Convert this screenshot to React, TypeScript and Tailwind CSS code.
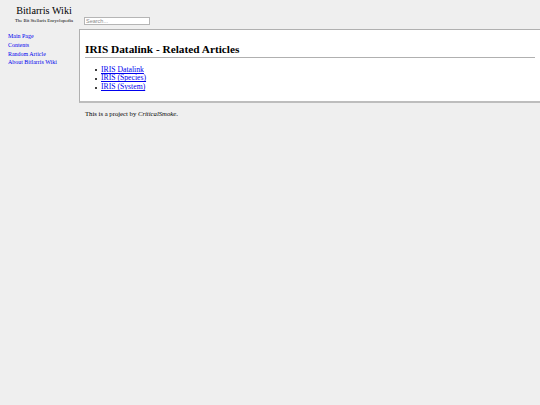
export default function App() {
  const sideLinks = ['Main Page', 'Contents', 'Random Article', 'About Bitlarris Wiki'];
  const articles = ['IRIS Datalink', 'IRIS (Species)', 'IRIS (System)'];

  return (
    <div className="min-h-screen bg-[#efefef] text-black" style={{ fontFamily: '"Liberation Serif", "Times New Roman", serif' }}>
      <header className="flex">
        <div className="w-[79px] shrink-0 pl-[9px] pt-[5px] text-center">
          <div className="text-[10.2px] leading-[12px]">Bitlarris Wiki</div>
          <div className="mt-[1px] text-[4.75px] leading-[6px]">The Bit Stellaris Encyclopedia</div>
        </div>
        <div className="pl-[5px] pt-[17px]">
          <input
            type="text"
            placeholder="Search..."
            className="block h-[8px] w-[66px] border border-[#b5b5b5] bg-white px-[1px] text-[5.5px] leading-[6px] placeholder:text-[#8a8a8a] focus:outline-none"
            style={{ fontFamily: '"Liberation Sans", Arial, sans-serif' }}
          />
        </div>
      </header>

      <div className="mt-[4px] flex">
        <nav className="w-[79px] shrink-0 pl-[8px] pt-[3px]">
          <ul className="flex flex-col">
            {sideLinks.map((l) => (
              <li key={l} className="text-[5.95px] leading-[8.8px]">
                <a href="#" className="text-[#0000ee] no-underline">{l}</a>
              </li>
            ))}
          </ul>
        </nav>

        <main className="flex-1">
          <div className="border border-[#b0b0b0] border-r-0 border-b-2 border-b-[#bdbdbd] bg-white px-[5px] pb-[9px] pt-[13px]">
            <h2 className="border-b border-[#b0b0b0] pb-[1px] text-[11.3px] font-bold leading-[13px]">
              IRIS Datalink - Related Articles
            </h2>
            <ul className="mt-[7.5px]">
              {articles.map((a) => (
                <li key={a} className="flex items-center pl-[10px] text-[7.7px] leading-[8.85px]">
                  <span className="mr-[4px] h-[2px] w-[2px] rounded-full bg-black" />
                  <a href="#" className="text-[#0000ee] underline">{a}</a>
                </li>
              ))}
            </ul>
          </div>
          <p className="mt-[6.5px] pl-[6px] text-[6.7px] leading-[7.7px]">
            This is a project by <i>CriticalSmoke</i>.
          </p>
        </main>
      </div>
    </div>
  );
}
